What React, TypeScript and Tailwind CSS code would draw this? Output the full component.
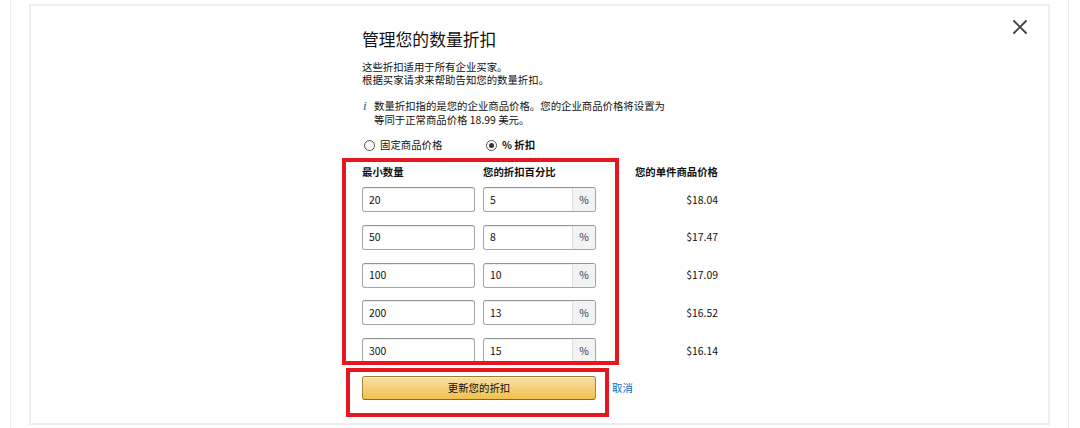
import React from "react";

const tiers = [
  { qty: "20", pct: "5", price: "$18.04" },
  { qty: "50", pct: "8", price: "$17.47" },
  { qty: "100", pct: "10", price: "$17.09" },
  { qty: "200", pct: "13", price: "$16.52" },
  { qty: "300", pct: "15", price: "$16.14" },
];

const font = { fontFamily: '"Noto Sans CJK SC", "Noto Sans", sans-serif' };

const inputBox =
  "h-[25px] w-[113px] rounded-[3px] border border-[#a6a6a6] border-t-[#949494] bg-white shadow-[inset_0_1px_0_rgba(0,0,0,0.07)]";

export default function App() {
  return (
    <div className="relative h-[428px] w-[1080px] overflow-hidden bg-white text-[#111]" style={font}>
      {/* outer frame */}
      <div className="ml-[10px] h-full w-[1059px] border-x border-[#ececec] pt-[4px]">
        {/* modal panel */}
        <div className="relative ml-[18px] h-[421px] w-[1021px] border-2 border-[#eeeeee]">
          {/* close */}
          <button className="absolute right-[20px] top-[13px] flex h-[16px] w-[16px] items-center justify-center">
            <svg width="14" height="14" viewBox="0 0 14 14">
              <path d="M1 1 L13 13 M13 1 L1 13" stroke="#444" strokeWidth="1.9" strokeLinecap="round" />
            </svg>
          </button>

          <div className="pl-[331px] pt-[21px]">
            <h1 className="text-[16.8px] font-normal leading-[24px] text-[#111]">管理您的数量折扣</h1>

            <p className="mt-[9px] text-[10.4px] leading-[13px]">
              这些折扣适用于所有企业买家。
              <br />
              根据买家请求来帮助告知您的数量折扣。
            </p>

            {/* info note */}
            <div className="mt-[13px] flex text-[10.4px] leading-[13.5px]">
              <span
                className="w-[12px] pl-[1px] text-[13px] italic leading-[13.5px] text-[#0066c0]"
                style={{ fontFamily: '"Liberation Serif", serif' }}
              >
                i
              </span>
              <p>
                数量折扣指的是您的企业商品价格。您的企业商品价格将设置为
                <br />
                等同于正常商品价格 18.99 美元。
              </p>
            </div>

            {/* radios */}
            <div className="mt-[12px] flex h-[14px] items-center text-[10.4px]">
              <label className="flex w-[121px] items-center">
                <span className="ml-[2px] h-[11px] w-[11px] rounded-full border border-[#555] bg-white" />
                <span className="ml-[5px]">固定商品价格</span>
              </label>
              <label className="flex items-center">
                <span className="ml-[3px] flex h-[11px] w-[11px] items-center justify-center rounded-full border border-[#555] bg-white">
                  <span className="h-[5px] w-[5px] rounded-full bg-[#333]" />
                </span>
                <span className="ml-[5px] font-bold">% 折扣</span>
              </label>
            </div>

            {/* table headers */}
            <div className="mt-[13px] flex h-[14px] items-center text-[10.4px] font-bold">
              <span className="w-[121px]">最小数量</span>
              <span className="w-[121px]">您的折扣百分比</span>
              <span className="w-[114px] text-right">您的单件商品价格</span>
            </div>

            {/* tier rows */}
            <div className="mt-[8px] flex flex-col gap-[12.75px]">
              {tiers.map((t) => (
                <div key={t.qty} className="flex items-center text-[10.4px]">
                  <div className={`${inputBox} flex items-center pl-[6px]`}>{t.qty}</div>
                  <div className={`${inputBox} ml-[8px] flex overflow-hidden`}>
                    <span className="flex flex-1 items-center pl-[6px]">{t.pct}</span>
                    <span className="flex w-[23px] items-center justify-center border-l border-[#dddddd] bg-[#f3f3f3] text-[#333]">
                      %
                    </span>
                  </div>
                  <span className="w-[122px] text-right">{t.price}</span>
                </div>
              ))}
            </div>

            {/* actions */}
            <div className="mt-[13px] flex items-center">
              <button className="h-[24px] w-[234px] rounded-[3px] border border-[#a88734] border-b-[#846a29] border-t-[#9c7e31] bg-gradient-to-b from-[#f7dfa5] to-[#f0c14b] text-[10.4px] text-[#111] shadow-[inset_0_1px_0_rgba(255,255,255,0.4)]">
                更新您的折扣
              </button>
              <a className="ml-[16px] text-[10.4px] text-[#0066c0]">取消</a>
            </div>
          </div>
        </div>
      </div>

      {/* annotation boxes */}
      <div className="pointer-events-none absolute left-[342px] top-[158px] h-[207px] w-[277px] border-4 border-[#e8161f]" />
      <div className="pointer-events-none absolute left-[346px] top-[368px] h-[49px] w-[263px] border-4 border-[#e8161f]" />
    </div>
  );
}
